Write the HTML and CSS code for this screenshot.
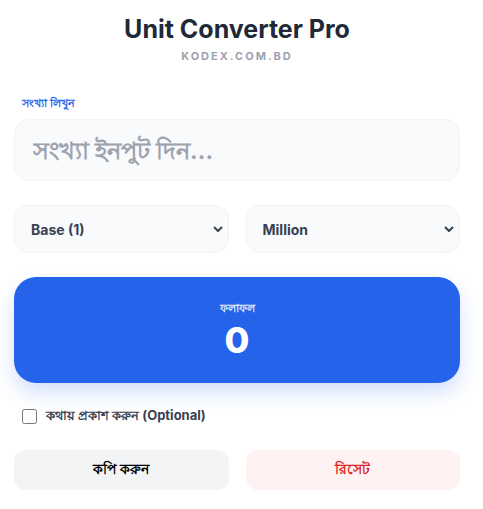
FILE: index.html
```html
<!DOCTYPE html>
<html lang="bn">
<head>
  <meta charset="UTF-8" />
  <title>Unit Converter Pro</title>
  <link rel="stylesheet" href="styles.css">
</head>
<body>
  <div class="converter">
    <h1>Unit Converter Pro</h1>
    <p class="brand">KODEX.COM.BD</p>

    <label class="field-label" for="numInput">সংখ্যা লিখুন</label>
    <input id="numInput" type="text" class="num-input" placeholder="সংখ্যা ইনপুট দিন..." />

    <div class="select-row">
      <select class="unit-select">
        <option>Base (1)</option>
      </select>
      <select class="unit-select">
        <option>Million</option>
      </select>
    </div>

    <div class="result-card">
      <span class="result-label">ফলাফল</span>
      <span class="result-value">0</span>
    </div>

    <label class="words-check">
      <input type="checkbox" />
      <span>কথায় প্রকাশ করুন (Optional)</span>
    </label>

    <div class="button-row">
      <button class="btn-copy">কপি করুন</button>
      <button class="btn-reset">রিসেট</button>
    </div>
  </div>
</body>
</html>
```

FILE: styles.css
```css
body {
  margin: 0;
  background-color: #fff;
  font-family: "Inter", "Noto Sans", sans-serif;
}

.converter {
  padding: 14px 23px 20px 14px;
}

h1 {
  margin: 0;
  text-align: center;
  font-size: 25px;
  font-weight: 700;
  color: #1f2937;
  line-height: 30px;
}

.brand {
  margin: 5px 0 0;
  text-align: center;
  font-size: 11px;
  font-weight: 700;
  letter-spacing: 2px;
  color: #9ca3af;
}

.field-label {
  display: block;
  margin: 32px 0 5px 8px;
  font-size: 11px;
  font-weight: 600;
  color: #2563eb;
}

.num-input {
  box-sizing: border-box;
  width: 100%;
  height: 62px;
  padding: 0 18px;
  border: 1px solid #f1f3f6;
  border-radius: 16px;
  background-color: #f8fafc;
  font-family: inherit;
  font-size: 24px;
  font-weight: 600;
  outline: none;
}

.num-input::placeholder {
  color: #9ca3af;
}

.select-row,
.button-row {
  display: grid;
  grid-template-columns: 1fr 1fr;
  gap: 17px;
}

.select-row {
  margin-top: 24px;
}

.unit-select {
  height: 48px;
  padding: 0 16px;
  border: 1px solid #f1f3f6;
  border-radius: 14px;
  background-color: #f8fafc;
  font-family: inherit;
  font-size: 14px;
  font-weight: 700;
  color: #374151;
  -webkit-appearance: none;
  appearance: none;
  background-image: url("data:image/svg+xml;utf8,<svg xmlns='http://www.w3.org/2000/svg' width='10' height='6' viewBox='0 0 10 6'><path d='M1 1l4 4 4-4' fill='none' stroke='%23374151' stroke-width='2'/></svg>");
  background-repeat: no-repeat;
  background-position: right 5px center;
}

.result-card {
  margin-top: 24px;
  height: 106px;
  border-radius: 22px;
  background-color: #2563eb;
  box-shadow: 0 10px 20px rgba(37, 99, 235, 0.2);
  display: flex;
  flex-direction: column;
  align-items: center;
  justify-content: center;
  color: #fff;
}

.result-label {
  font-size: 11px;
  font-weight: 700;
  opacity: 0.85;
}

.result-value {
  font-size: 36px;
  font-weight: 800;
  line-height: 42px;
}

.words-check {
  display: flex;
  align-items: center;
  gap: 9px;
  margin: 23px 0 0 8px;
  font-size: 13px;
  font-weight: 700;
  color: #374151;
}

.words-check input {
  margin: 0;
  width: 15px;
  height: 15px;
}

.button-row {
  margin-top: 23px;
}

.button-row button {
  height: 40px;
  border: none;
  border-radius: 12px;
  font-family: inherit;
  font-size: 14px;
  font-weight: 700;
  cursor: pointer;
}

.btn-copy {
  background-color: #f3f4f6;
  color: #000;
}

.btn-reset {
  background-color: #fef2f2;
  color: #dc2626;
}
```
